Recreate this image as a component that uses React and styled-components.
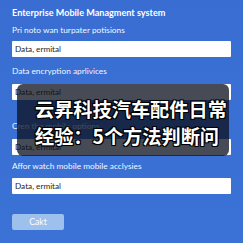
import styled, { createGlobalStyle } from "styled-components"

const Global = createGlobalStyle`
    html, body {
        margin: 0;
        padding: 0;
        background: #3a70d4;
    }
`

const Page = styled.div`
    position: relative;
    width: 243px;
    height: 243px;
    box-sizing: border-box;
    padding: 7px 12px 0 12px;
    background: linear-gradient(180deg, #396dd1 0%, #3b72d6 100%);
    display: flex;
    flex-direction: column;
    font-family: Lato, "Noto Sans", sans-serif;
    overflow: hidden;
`

const Title = styled.div`
    font-size: 9.1px;
    line-height: 12px;
    font-weight: 700;
    color: #ffffff;
`

const Label = styled.div`
    margin-top: ${p => p.$top}px;
    font-size: 8.3px;
    line-height: 11px;
    color: #f2f6ff;
    white-space: nowrap;
`

const Input = styled.div`
    margin-top: ${p => p.$top}px;
    height: 16px;
    box-sizing: border-box;
    padding: 0 3px;
    display: flex;
    align-items: center;
    background: #ffffff;
    border-radius: 1px;
    font-size: 8.2px;
    color: #1e1e1e;
`

const Button = styled.div`
    margin-top: 20px;
    width: 52px;
    height: 16px;
    border-radius: 2px;
    background: #9dc0ec;
    color: #ffffff;
    font-size: 8.6px;
    display: flex;
    align-items: center;
    justify-content: center;
`

const Caption = styled.div`
    position: absolute;
    left: 17px;
    top: 84px;
    width: 212px;
    height: 72px;
    box-sizing: border-box;
    padding: 12px 0 0 18px;
    border-radius: 6px;
    background: rgba(12, 18, 32, 0.76);
    font-family: "Noto Sans CJK SC", "Noto Sans", sans-serif;
    font-weight: 700;
    font-size: 19.2px;
    line-height: 27px;
    color: #ffffff;
    white-space: nowrap;
    text-shadow: -1px -1px 0 #000, 1px -1px 0 #000, -1px 1px 0 #000, 1px 1px 0 #000, 0 0 2px #000;
`

const App = () => {
    return (
        <Page>
            <Global />
            <Title>Enterprise Mobile Managment system</Title>
            <Label $top={6}>Pri noto wan turpater potisions</Label>
            <Input $top={5}>Data, ermital</Input>
            <Label $top={9}>Data encryption aprlivices</Label>
            <Input $top={7}>Data, ermital</Input>
            <Label $top={21}>Cren the mobile options</Label>
            <Input $top={7}>Data, ermital</Input>
            <Label $top={6}>Affor watch mobile mobile acclysies</Label>
            <Input $top={6}>Data, ermital</Input>
            <Button>Cakt</Button>
            <Caption>
                云昇科技汽车配件日常<br />
                经验：5个方法判断问
            </Caption>
        </Page>
    )
}

export default App
